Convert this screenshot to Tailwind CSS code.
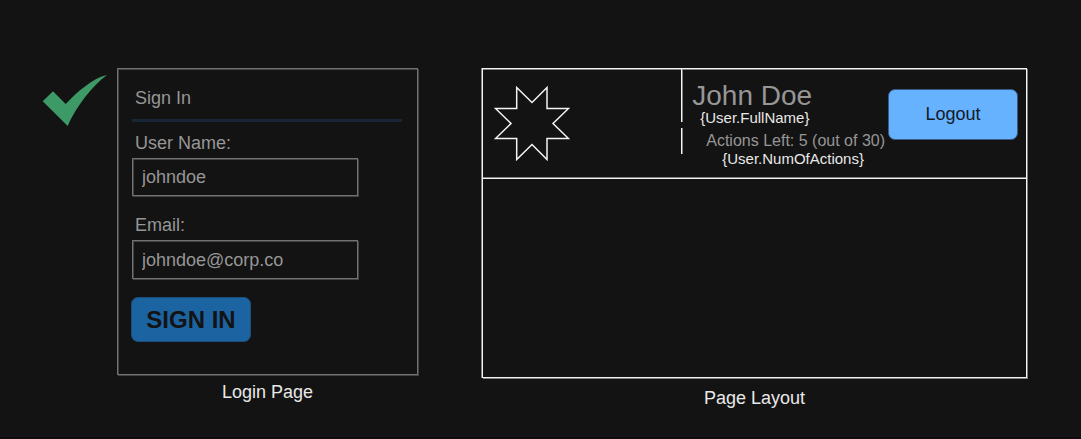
<!DOCTYPE html>
<html lang="en">
<head>
<meta charset="utf-8">
<meta name="viewport" content="width=device-width, initial-scale=1">
<title>Login Page and Page Layout</title>
<script src="https://cdn.jsdelivr.net/npm/@tailwindcss/browser@4"></script>
</head>
<body class="flex min-h-screen flex-col border-b-2 border-[#100c0f] bg-[#131313] font-['Liberation_Sans',Arial,sans-serif] text-lg leading-5 text-[#969696]">
<main class="flex flex-1 items-start pt-17 pr-13.5 pl-[42px]">
  <svg class="mt-1.5 mr-2.5 h-[53px] w-[65px] shrink-0" viewBox="0 0 65 53" role="img" aria-label="Done">
    <path fill="#3d9a66" d="M.7 27.3 11 17.2 23.7 30C35 18 51 4 65 1C50 12 34 33 25.7 52Z"/>
  </svg>

  <div class="grid flex-1 grid-cols-[301fr_545fr] gap-16">
    <figure>
      <form class="flex flex-col items-start border border-[#717171] px-3.5 pt-[19px] pb-8 shadow-[1px_1px_0_#434343,inset_1px_1px_0_#434343]">
        <h1 class="pl-[3px]">Sign In</h1>
        <hr class="mt-[11px] h-[3px] w-full max-w-[270px] border-0 bg-[#182635]">
        <label for="user" class="mt-[11px] pl-[3px]">User Name:</label>
        <input id="user" type="text" value="johndoe" class="mt-[5px] h-[38px] w-[226px] border border-[#717171] px-[9px] shadow-[1px_1px_0_#434343,inset_1px_1px_0_#434343] outline-none">
        <label for="email" class="mt-[19px] pl-[3px]">Email:</label>
        <input id="email" type="text" value="johndoe@corp.co" class="mt-[5px] h-[39px] w-[226px] border border-[#717171] px-[9px] pt-px shadow-[1px_1px_0_#434343,inset_1px_1px_0_#434343] outline-none">
        <button type="button" class="-ml-px mt-[18px] h-[45px] w-[120px] rounded-[7px] border border-[#1b4f7b] bg-[#1c64a1] text-2xl leading-6 font-bold text-[#131313]">SIGN IN</button>
      </form>
      <figcaption class="mt-[7px] text-center text-[#e8e8e8]">Login Page</figcaption>
    </figure>

    <figure>
      <div class="flex h-[310px] flex-col border border-[#f4f4f4] shadow-[1px_1px_0_#808080,-1px_0_0_#808080,inset_0_1px_0_#808080]">
        <header class="flex h-[110px] items-start border-b border-[#f4f4f4] shadow-[inset_0_-1px_0_#808080]">
          <svg class="mt-4 ml-[11px] h-[76px] w-[76px] shrink-0" viewBox="0 0 76 76" fill="none" stroke="#f4f4f4" stroke-width="1.5" role="img" aria-label="Logo">
            <path d="M22.7 2.5 38 17.5 53 2.5V23.5H74.5L59 38.5 74.5 53.5H53V74.5L38 59.5 22.7 74.5V53.5H1.5L17 38.5 1.5 23.5H22.7Z"/>
          </svg>
          <div class="mr-[3px] ml-auto flex flex-col gap-1.5">
            <div class="h-[53px] border-l border-[#f4f4f4] pt-[11px] pl-2.5 shadow-[inset_1px_0_0_#808080]">
              <p class="text-[28px] leading-8">John Doe</p>
              <p class="-mt-1 pl-2 text-[15px] text-[#e8e8e8]">{User.FullName}</p>
            </div>
            <div class="h-[26px] border-l border-[#f4f4f4] pt-[3px] pl-6 shadow-[inset_1px_0_0_#808080]">
              <p class="text-base leading-5">Actions Left: 5 (out of 30)</p>
              <p class="-mt-0.5 pl-4 text-[15px] text-[#e8e8e8]">{User.NumOfActions}</p>
            </div>
          </div>
          <button type="button" class="mt-5 mr-2 h-[51px] w-[130px] shrink-0 rounded-[7px] border border-[#3a5a88] bg-[#66b2ff] pb-0.5 text-[#131b27]">Logout</button>
        </header>
      </div>
      <figcaption class="mt-2.5 text-center text-[#e8e8e8]">Page Layout</figcaption>
    </figure>
  </div>
</main>
</body>
</html>
